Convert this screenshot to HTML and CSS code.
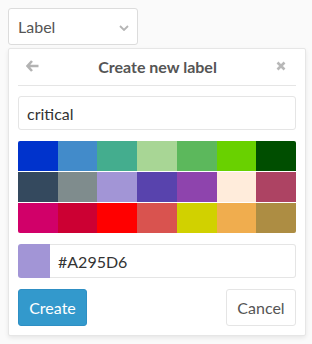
FILE: index.html
```html
<!DOCTYPE html>
<html>
<head>
<meta charset="utf-8">
<link rel="stylesheet" href="styles.css">
</head>
<body>
<div class="wrap">
  <button class="toggle">
    <span>Label</span>
    <svg class="chev" width="10" height="6" viewBox="0 0 10 6"><path d="M1 1 L5 5 L9 1" fill="none" stroke="#b5b5b5" stroke-width="1.8"/></svg>
  </button>
  <div class="menu">
    <div class="head">
      <svg class="back" width="13" height="12" viewBox="0 0 13 12"><path d="M6 1 L1.5 6 L6 11 M2 6 H12.5" fill="none" stroke="#b3b3b3" stroke-width="2.6" stroke-linejoin="miter"/></svg>
      <span class="title">Create new label</span>
      <svg class="close" width="10" height="10" viewBox="0 0 10 10"><path d="M1.5 1.5 L8.5 8.5 M8.5 1.5 L1.5 8.5" stroke="#b8b8b8" stroke-width="2.6"/></svg>
    </div>
    <div class="body">
      <div class="field">critical</div>
      <div class="palette">
        <span style="background:#0033CC"></span><span style="background:#428BCA"></span><span style="background:#44AD8E"></span><span style="background:#A8D695"></span><span style="background:#5CB85C"></span><span style="background:#69D100"></span><span style="background:#004E00"></span>
        <span style="background:#34495E"></span><span style="background:#7F8C8D"></span><span style="background:#A295D6"></span><span style="background:#5843AD"></span><span style="background:#8E44AD"></span><span style="background:#FFECDB"></span><span style="background:#AD4363"></span>
        <span style="background:#D10069"></span><span style="background:#CC0033"></span><span style="background:#FF0000"></span><span style="background:#D9534F"></span><span style="background:#D1D100"></span><span style="background:#F0AD4E"></span><span style="background:#AD8D43"></span>
      </div>
      <div class="colorrow">
        <div class="swatch"></div>
        <div class="field hex">#A295D6</div>
      </div>
      <div class="actions">
        <button class="btn create">Create</button>
        <button class="btn cancel">Cancel</button>
      </div>
    </div>
  </div>
</div>
</body>
</html>
```
FILE: styles.css
```css
* { box-sizing: border-box; }
html, body { margin: 0; padding: 0; }
body {
  background: #fafafa;
  font-family: Lato, "Open Sans", sans-serif;
  color: #2e2e2e;
  width: 312px;
  height: 344px;
  overflow: hidden;
}
.wrap { padding: 8px 0 0 8px; }
.toggle {
  width: 130px;
  height: 37px;
  background: #fff;
  border: 1px solid #dcdcdc;
  border-radius: 3px;
  display: flex;
  align-items: center;
  justify-content: space-between;
  padding: 0 8px 0 9px;
  font: inherit;
  font-size: 16px;
  color: #555;
}
.chev { margin-top: 2px; }
.menu {
  margin-top: 3px;
  width: 298px;
  height: 288px;
  background: #fff;
  border: 1px solid #e6e6e6;
  border-radius: 2px;
  box-shadow: 0 2px 4px rgba(0,0,0,0.08);
  padding: 0 9px;
}
.head {
  height: 37px;
  border-bottom: 1px solid #e5e5e5;
  display: flex;
  align-items: center;
  justify-content: space-between;
  padding: 0 10px 2px 8px;
}
.title {
  font-weight: bold;
  font-size: 16px;
  color: #555;
}
.body { padding-top: 10px; }
.field {
  height: 34px;
  border: 1px solid #e5e5e5;
  border-radius: 3px;
  padding: 0 8px;
  display: flex;
  align-items: center;
  font-size: 16px;
  color: #333;
}
.palette {
  margin-top: 11px;
  display: grid;
  grid-template-columns: repeat(7, 1fr);
  row-gap: 1px;
  border-radius: 2px;
  overflow: hidden;
}
.palette span { height: 30px; display: block; }
.colorrow {
  margin-top: 11px;
  display: flex;
}
.swatch {
  width: 32px;
  height: 34px;
  background: #A295D6;
  border-radius: 3px 0 0 3px;
}
.hex {
  flex: 1;
  border-left: none;
  border-radius: 0 3px 3px 0;
}
.actions {
  margin-top: 11px;
  display: flex;
  justify-content: space-between;
}
.btn {
  height: 37px;
  font: inherit;
  font-size: 16px;
  border-radius: 3px;
  padding: 0 10px;
}
.create {
  width: 69px;
  background: #3399cc;
  border: 1px solid #2e8fc4;
  color: #fff;
}
.cancel {
  width: 70px;
  background: #fff;
  border: 1px solid #e5e5e5;
  color: #555;
}
```
